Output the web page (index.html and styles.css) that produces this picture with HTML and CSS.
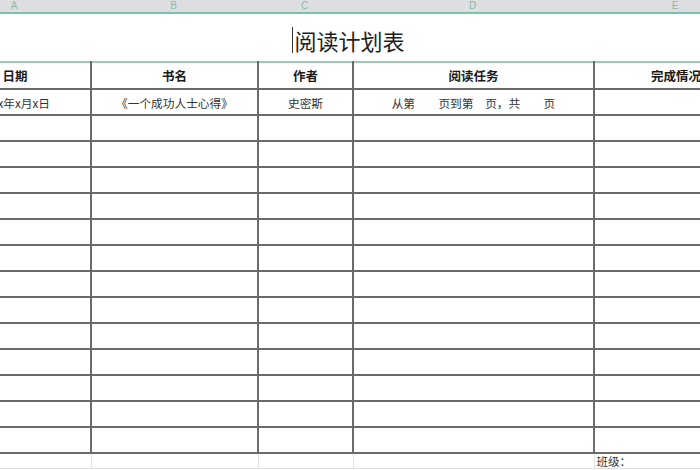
FILE: index.html
```html
<!DOCTYPE html>
<html lang="zh">
<head>
<meta charset="utf-8">
<link rel="stylesheet" href="styles.css">
</head>
<body>
<div class="sheet">
  <div class="colbar">
    <div class="col w-a">A</div>
    <div class="col w-b">B</div>
    <div class="col w-c">C</div>
    <div class="col w-d">D</div>
    <div class="col w-e">E</div>
  </div>
  <div class="title-row"><span class="title">阅读计划表</span></div>
  <table class="grid">
    <colgroup>
      <col class="w-a"><col class="w-b"><col class="w-c"><col class="w-d"><col class="w-e">
    </colgroup>
    <tr class="head">
      <td>日期</td><td>书名</td><td>作者</td><td>阅读任务</td><td>完成情况</td>
    </tr>
    <tr class="row">
      <td>xxxx年x月x日</td><td>《一个成功人士心得》</td><td>史密斯</td><td>从第　　页到第　页，共　　页</td><td></td>
    </tr>
    <tr class="row"><td></td><td></td><td></td><td></td><td></td></tr>
    <tr class="row"><td></td><td></td><td></td><td></td><td></td></tr>
    <tr class="row"><td></td><td></td><td></td><td></td><td></td></tr>
    <tr class="row"><td></td><td></td><td></td><td></td><td></td></tr>
    <tr class="row"><td></td><td></td><td></td><td></td><td></td></tr>
    <tr class="row"><td></td><td></td><td></td><td></td><td></td></tr>
    <tr class="row"><td></td><td></td><td></td><td></td><td></td></tr>
    <tr class="row"><td></td><td></td><td></td><td></td><td></td></tr>
    <tr class="row"><td></td><td></td><td></td><td></td><td></td></tr>
    <tr class="row"><td></td><td></td><td></td><td></td><td></td></tr>
    <tr class="row"><td></td><td></td><td></td><td></td><td></td></tr>
    <tr class="row"><td></td><td></td><td></td><td></td><td></td></tr>
    <tr class="row"><td></td><td></td><td></td><td></td><td></td></tr>
    <tr class="foot"><td></td><td></td><td></td><td></td><td class="cls">班级：</td></tr>
  </table>
</div>
</body>
</html>
```
FILE: styles.css
```css
html, body {
  margin: 0;
  padding: 0;
  background: #ffffff;
}
body {
  width: 700px;
  height: 470px;
  overflow: hidden;
  font-family: "Noto Sans CJK SC", "Noto Sans", sans-serif;
  color: #2a2a2a;
}
.sheet {
  margin-left: -62px;
  width: 819px;
}
.w-a { width: 152px; }
.w-b { width: 167px; }
.w-c { width: 95px; }
.w-d { width: 241px; }
.w-e { width: 164px; }

.colbar {
  display: flex;
  height: 12px;
  background: #dcdee2;
  border-bottom: 2px solid #7cc2a6;
}
.col {
  flex: none;
  text-align: center;
  font-family: "Liberation Sans", sans-serif;
  font-size: 10px;
  line-height: 12px;
  color: #8fb9a8;
}
.title-row {
  height: 47px;
  display: flex;
  align-items: center;
  justify-content: center;
  padding-left: 2px;
}
.title {
  font-size: 22px;
  line-height: 26px;
  color: #1e1e1e;
  border-left: 1px solid #333;
  padding-left: 1px;
  margin-top: 4px;
}
.grid {
  border-collapse: collapse;
  table-layout: fixed;
  width: 819px;
}
.grid td {
  border: 2px solid #6a6a6a;
  padding: 0;
  text-align: center;
  font-size: 11.7px;
  color: #333;
  white-space: nowrap;
  overflow: hidden;
}
.grid tr:first-child td {
  border-top-color: #9ccab9;
}
.head {
  height: 27px;
}
.head td {
  font-weight: 700;
  font-size: 12.5px;
  color: #1a1a1a;
}
.row {
  height: 26px;
}
.foot {
  height: 14px;
}
.foot td {
  border-left: 1px solid #e2e2e2;
  border-right: 1px solid #e2e2e2;
  border-bottom: 1px solid #e0e0e0;
}
.foot td.cls {
  text-align: left;
  padding-left: 2px;
  font-size: 11.5px;
  line-height: 14px;
  vertical-align: top;
}
```
